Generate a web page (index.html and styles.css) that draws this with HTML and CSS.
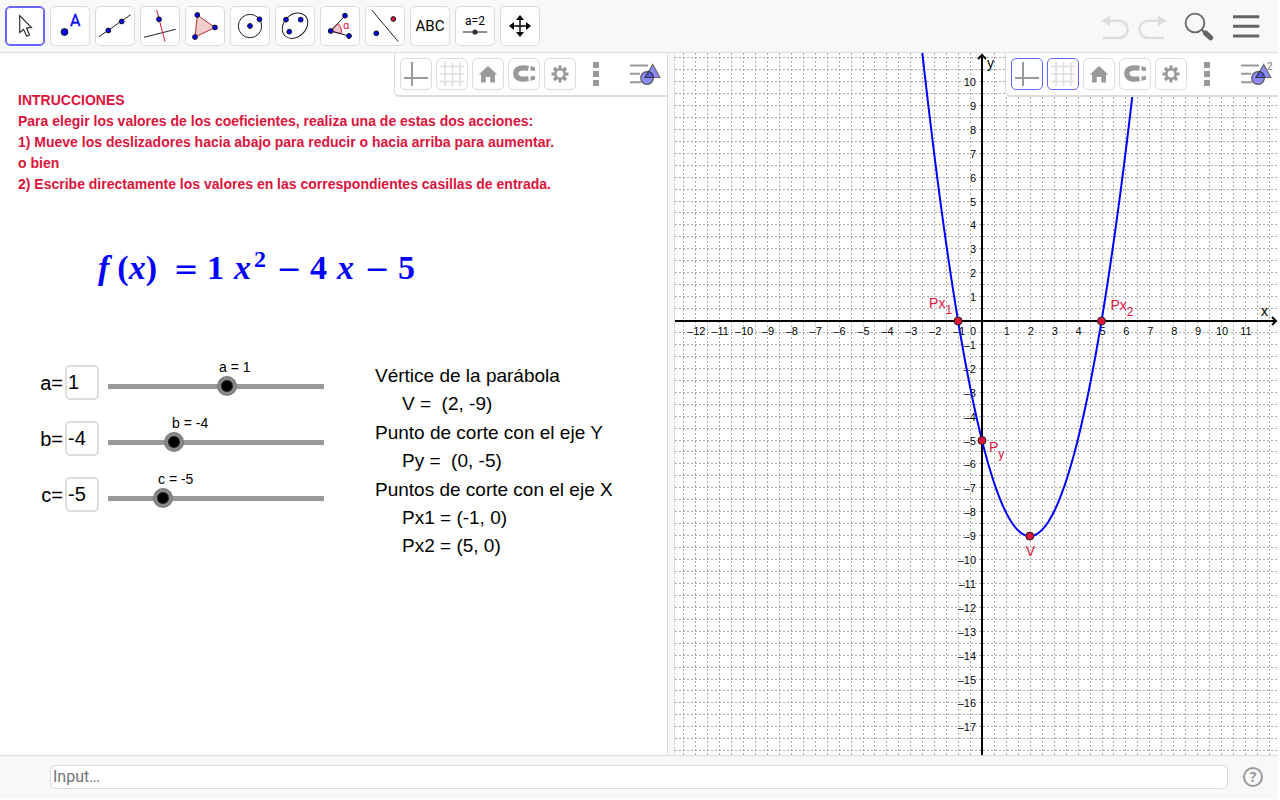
FILE: index.html
```html
<!DOCTYPE html>
<html lang="es">
<head>
<meta charset="utf-8">
<title>Función cuadrática</title>
<link rel="stylesheet" href="styles.css">
</head>
<body>
<svg class="defs" width="0" height="0" aria-hidden="true">
  <symbol id="i-axes" viewBox="0 0 30 30"><path d="M11 3V27M3 19H27" stroke="#999" stroke-width="2" fill="none"/></symbol>
  <symbol id="i-grid" viewBox="0 0 30 30"><path d="M8 3V27M15.500 3V27M23 3V27M3 7.500H27M3 15H27M3 22.500H27" stroke="#e3dcdc" stroke-width="1.600" fill="none"/></symbol>
  <symbol id="i-home" viewBox="0 0 30 30"><path d="M15 7L24.200 15.500H22V23.500H17.300V18H12.700V23.500H8V15.500H5.800Z" fill="#999"/></symbol>
  <symbol id="i-magnet" viewBox="0 0 30 30"><path d="M19.500 9.300C12 8 6.800 9.500 6.800 14.500S12 21 19.500 19.700" stroke="#999" stroke-width="5.200" fill="none"/><path d="M21.500 7L26 8.500V12L21.500 11.500ZM21.500 17.500L26 17V20.500L21.500 22Z" fill="#999"/></symbol>
  <symbol id="i-gear" viewBox="0 0 30 30"><circle cx="15" cy="15" r="4.700" stroke="#999" stroke-width="2.600" fill="none"/><path d="M15 6.500V10M15 20V23.500M6.500 15H10M20 15H23.500M9 9L11.500 11.500M18.500 18.500L21 21M21 9L18.500 11.500M11.500 18.500L9 21" stroke="#999" stroke-width="3.200"/></symbol>
  <symbol id="i-dots" viewBox="0 0 32 32"><path d="M13 4h6v6h-6zM13 13h6v6h-6zM13 22h6v6h-6z" fill="#999"/></symbol>
  <symbol id="i-style" viewBox="0 0 34 32"><path d="M1 7.500H19M1 15.700H11M1 24.300H12" stroke="#999" stroke-width="2"/><path d="M23.700 6.500L16.300 19.500H30.800Z" fill="#8c8cff" stroke="#666" stroke-width="1.200"/><circle cx="18" cy="20" r="6.300" fill="#8c8cff" stroke="#555" stroke-width="1.200"/><path d="M19.500 13.500L16 19.500H24.300A6.300 6.300 0 0 0 19.500 13.500Z" fill="#5c5cf0" stroke="#333" stroke-width="1.200"/></symbol>
</svg>

<div class="app">
  <header class="topbar">
    <div class="tools">
      <button class="tool selected" aria-label="Mover"><svg viewBox="0 0 38 38"><path d="M13.700 8.700V25.500L17.500 22.300L20.800 29.300L23.600 28L20.500 21L25.500 20.500Z" fill="#fff" stroke="#222" stroke-width="1.100"/></svg></button>
      <button class="tool" aria-label="Punto"><svg viewBox="0 0 38 38"><circle cx="13.500" cy="25" r="3.400" class="pt"/><text x="19" y="19" class="t-point">A</text></svg></button>
      <button class="tool" aria-label="Recta"><svg viewBox="0 0 38 38"><path d="M3 29.700L34.700 7.700" class="ln"/><circle cx="12.300" cy="23.500" r="2.400" class="pt"/><circle cx="25.700" cy="14.500" r="2.400" class="pt"/></svg></button>
      <button class="tool" aria-label="Perpendicular"><svg viewBox="0 0 38 38"><path d="M3 30.300L34.700 22.300" class="ln"/><path d="M15.700 3L24 34.700" stroke="#dc143c"/><circle cx="18" cy="12.300" r="2.400" class="pt"/></svg></button>
      <button class="tool" aria-label="Polígono"><svg viewBox="0 0 38 38"><path d="M11.300 8L29 20.500L9 30Z" fill="#f3cccc" stroke="#b03030"/><circle cx="11.300" cy="8" r="2.400" class="pt"/><circle cx="29" cy="20.500" r="2.400" class="pt"/><circle cx="9" cy="30" r="2.400" class="pt"/></svg></button>
      <button class="tool" aria-label="Circunferencia"><svg viewBox="0 0 38 38"><circle cx="19" cy="19" r="11.700" class="ln"/><circle cx="19" cy="19" r="2.400" class="pt"/><circle cx="28.500" cy="12.300" r="2.400" class="pt"/></svg></button>
      <button class="tool" aria-label="Elipse"><svg viewBox="0 0 38 38"><ellipse cx="19" cy="18.700" rx="14.200" ry="11" transform="rotate(-45 19 18.700)" class="ln"/><circle cx="10" cy="12.700" r="2.400" class="pt"/><circle cx="24.700" cy="12.700" r="2.400" class="pt"/><circle cx="13.300" cy="24.700" r="2.400" class="pt"/></svg></button>
      <button class="tool" aria-label="Ángulo"><svg viewBox="0 0 38 38"><path d="M9.700 24L17 16.500A10.500 10.500 0 0 1 20 26.800Z" fill="#f6c4cc" stroke="#dc143c"/><path d="M24 8.700L9.700 24L28 29" class="ln"/><circle cx="9.700" cy="24" r="2.400" class="pt"/><circle cx="24" cy="8.700" r="2.400" class="pt"/><circle cx="28" cy="29" r="2.400" class="pt"/><text x="22" y="22" class="t-angle">α</text></svg></button>
      <button class="tool" aria-label="Simetría"><svg viewBox="0 0 38 38"><path d="M5.700 3L32.300 34.700" class="ln"/><circle cx="10.300" cy="26.300" r="2.400" class="pt"/><circle cx="27.300" cy="12" r="2.400" fill="#dc143c" stroke="#222"/></svg></button>
      <button class="tool abc">ABC</button>
      <button class="tool" aria-label="Deslizador"><svg viewBox="0 0 38 38"><text x="19" y="18" class="t-slider">a=2</text><path d="M6.700 25H31.300" class="ln"/><circle cx="19" cy="25" r="2.600" fill="#333"/></svg></button>
      <button class="tool" aria-label="Desplazar"><svg viewBox="0 0 38 38"><path d="M19 11V27M11 19H27" stroke="#000" stroke-width="1.400"/><path d="M19 8L23 13H15ZM19 30L23 25H15ZM8 19L13 15V23ZM30 19L25 15V23Z"/></svg></button>
    </div>
    <div class="actions">
      <button class="plain" aria-label="Deshacer"><svg viewBox="0 0 32 32"><path d="M1.300 10.700L10 5.300V16Z" fill="#ddd"/><path d="M9 10.700H19A8.600 8.600 0 0 1 19 28H3" class="arc"/></svg></button>
      <button class="plain" aria-label="Rehacer"><svg viewBox="0 0 32 32"><path d="M30.700 10.700L22 5.300V16Z" fill="#ddd"/><path d="M23 10.700H12A8.600 8.600 0 0 0 12 28H28" class="arc"/></svg></button>
      <button class="plain search" aria-label="Buscar"><svg viewBox="0 0 32 32"><circle cx="13" cy="13" r="9.400" fill="none" stroke="#666" stroke-width="1.800"/><path d="M19.500 19.500L23 23" stroke="#666" stroke-width="2"/><path d="M23.500 23L28.500 27.700" stroke="#666" stroke-width="5.200" stroke-linecap="round"/></svg></button>
      <button class="plain menu" aria-label="Menú"><svg viewBox="0 0 32 32"><path d="M3 6.700H29.300M3 16.300H29.300M3 26H29.300" stroke="#666" stroke-width="3"/></svg></button>
    </div>
  </header>

  <main class="views">
    <section class="view">
      <div class="stylebar">
        <button class="opt" aria-label="Ejes"><svg><use href="#i-axes"/></svg></button>
        <button class="opt" aria-label="Cuadrícula"><svg><use href="#i-grid"/></svg></button>
        <button class="opt" aria-label="Inicio"><svg><use href="#i-home"/></svg></button>
        <button class="opt" aria-label="Captura"><svg><use href="#i-magnet"/></svg></button>
        <button class="opt" aria-label="Ajustes"><svg><use href="#i-gear"/></svg></button>
        <button class="plain" aria-label="Más"><svg><use href="#i-dots"/></svg></button>
        <button class="plain toggle" aria-label="Barra de estilo"><svg><use href="#i-style"/></svg></button>
      </div>
      <div class="sheet">
        <div class="instructions">
          <p>INTRUCCIONES</p>
          <p>Para elegir los valores de los coeficientes, realiza una de estas dos acciones:</p>
          <p>1) Mueve los deslizadores hacia abajo para reducir o hacia arriba para aumentar.</p>
          <p>o bien</p>
          <p>2) Escribe directamente los valores en las correspondientes casillas de entrada.</p>
        </div>
        <div class="formula"><span class="fn"><i>f</i></span><span class="arg">(<i>x</i>)</span><span class="op">=</span><span class="num">1</span><span><i>x</i><sup>2</sup></span><span class="op">−</span><span class="num">4</span><span><i>x</i></span><span class="op">−</span><span class="num">5</span></div>
        <div class="panel">
          <div class="coefs">
            <div class="coef">
              <label for="a-box">a=</label><input class="box" id="a-box" type="text" value="1">
              <div class="slide"><label for="a-range" style="margin-left:118px">a = 1</label><input id="a-range" type="range" min="-10" max="10" value="1"></div>
            </div>
            <div class="coef">
              <label for="b-box">b=</label><input class="box" id="b-box" type="text" value="-4">
              <div class="slide"><label for="b-range" style="margin-left:71px">b = -4</label><input id="b-range" type="range" min="-10" max="10" value="-4"></div>
            </div>
            <div class="coef">
              <label for="c-box">c=</label><input class="box" id="c-box" type="text" value="-5">
              <div class="slide"><label for="c-range" style="margin-left:57px">c = -5</label><input id="c-range" type="range" min="-10" max="10" value="-5"></div>
            </div>
          </div>
          <dl class="results">
            <dt>Vértice de la parábola</dt>
            <dd>V =&nbsp; (2, -9)</dd>
            <dt>Punto de corte con el eje Y</dt>
            <dd>Py =&nbsp; (0, -5)</dd>
            <dt>Puntos de corte con el eje X</dt>
            <dd>Px1 = (-1, 0)</dd>
            <dd>Px2 = (5, 0)</dd>
          </dl>
        </div>
      </div>
    </section>
    <div class="splitter"></div>
    <section class="view">
      <svg class="plot" id="plot" role="img" aria-label="Gráfica de f(x)"></svg>
      <div class="stylebar">
        <button class="opt on" aria-label="Ejes"><svg><use href="#i-axes"/></svg></button>
        <button class="opt on" aria-label="Cuadrícula"><svg><use href="#i-grid"/></svg></button>
        <button class="opt" aria-label="Inicio"><svg><use href="#i-home"/></svg></button>
        <button class="opt" aria-label="Captura"><svg><use href="#i-magnet"/></svg></button>
        <button class="opt" aria-label="Ajustes"><svg><use href="#i-gear"/></svg></button>
        <button class="plain" aria-label="Más"><svg><use href="#i-dots"/></svg></button>
        <button class="plain toggle" aria-label="Barra de estilo"><svg><use href="#i-style"/><text x="27" y="12" class="t-two">2</text></svg></button>
      </div>
    </section>
  </main>

  <footer class="inputbar">
    <input class="entry" type="text" aria-label="Input" placeholder="Input…">
    <button class="help" aria-label="Ayuda">?</button>
  </footer>
</div>
<script src="plot.js"></script>
</body>
</html>
```
FILE: styles.css
```css
* { box-sizing: border-box; }
body { margin: 0; background: #fff; font-family: "Liberation Sans", Arial, sans-serif; color: #000; }
button { padding: 0; font: inherit; }
button svg { display: block; }
p, dl, dd { margin: 0; }
.defs { position: absolute; }

.app { display: grid; grid-template-rows: 53px 1fr 44px; height: 100vh; padding: 0 2px 1px 0; }

.topbar { display: flex; justify-content: space-between; align-items: center; padding: 0 16px 0 5px; background: #f8f8f8; border-bottom: 1px solid #dcdcdc; }
.tools { display: flex; gap: 5px; }
.tool { width: 40px; height: 40px; border: 1px solid #dcdcdc; border-radius: 5px; background: #fff; }
.tool.selected { border-color: #6666ff; box-shadow: inset 0 0 0 1px #6666ff; }
.tool svg { width: 38px; height: 38px; }
.tool.abc { font: 15px Roboto, sans-serif; color: #000; }
.pt { fill: #00f; stroke: #111; stroke-width: 1; }
.ln { fill: none; stroke: #222; stroke-width: 1; }
.t-point { font: 16px Roboto, sans-serif; fill: #00f; stroke: #00f; stroke-width: 0.3px; }
.t-angle { font: 11px Roboto, sans-serif; fill: #dc143c; }
.t-slider { font: 12px Roboto, sans-serif; text-anchor: middle; }
.t-two { font: 10px "Liberation Sans", sans-serif; fill: #777; }
.actions { display: flex; gap: 4px; }
.plain { width: 32px; height: 32px; border: 0; background: none; }
.plain svg { width: 32px; height: 32px; }
.arc { fill: none; stroke: #ddd; stroke-width: 2.6px; }
.search { margin-left: 10px; }
.menu { margin-left: 12px; }

.views { display: grid; grid-template-columns: 667fr 8px 603fr; min-height: 0; }
.view { position: relative; min-width: 0; overflow: hidden; }
.splitter { background: #f8f8f8; border: 1px solid #dcdcdc; border-width: 0 1px; }

.stylebar { position: absolute; top: 0; right: 0; display: flex; gap: 4px; padding: 5px 4px 5px 5px; background: #fff; border: 1px solid #dcdcdc; border-width: 0 0 2px 1px; border-bottom-left-radius: 5px; }
.opt { width: 32px; height: 32px; border: 1px solid #dcdcdc; border-radius: 5px; background: #fff; }
.opt.on { border-color: #6666ff; }
.opt svg { width: 30px; height: 30px; }
.toggle { width: 34px; margin-left: 13px; }
.toggle svg { width: 34px; overflow: visible; }

.sheet { padding: 37px 18px 0; }
.instructions { font-size: 14px; font-weight: bold; line-height: 21px; color: #dc143c; }
.formula { display: flex; align-items: baseline; margin: 51px 0 0 80px; font: bold 34px/44px "Liberation Serif", serif; color: #00f; }
.formula span { white-space: nowrap; }
.formula sup { margin-left: 3px; font-size: 24px; line-height: 0; vertical-align: 12px; }
.formula .fn { margin-right: 8px; }
.formula .arg { margin-right: 6px; }
.formula .op { width: 26px; margin: 0 8px 0 10px; text-align: center; font: 30px/30px "DejaVu Sans", sans-serif; }
.formula .num { margin-right: 10px; }
.panel { display: flex; align-items: flex-start; margin-top: 69px; padding-left: 22px; }
.coefs { display: grid; gap: 15px; width: 294px; flex: none; }
.coef { display: grid; grid-template-columns: 25px 34px 232px; align-items: end; font-size: 20px; }
.coef > label { padding-right: 2px; line-height: 33px; text-align: right; white-space: nowrap; }
.box { width: 34px; height: 35px; padding: 0 0 0 1px; border: 2px solid #dcdcdc; border-radius: 5px; background: #fff; font: 20px "Liberation Sans", sans-serif; color: #000; }
.slide { display: grid; grid-template-rows: 17px 20px; padding: 0 0 4px 2px; font-size: 14px; line-height: 17px; }
.slide input { appearance: none; width: 230px; height: 20px; margin: 0; background: linear-gradient(#999, #999) center / calc(100% - 14px) 5px no-repeat; }
.slide input::-webkit-slider-thumb { appearance: none; width: 18px; height: 18px; border: 3px solid #888; border-radius: 50%; background: #000; box-shadow: inset 0 0 0 1px #222, 0 0 0 1px #777; }
.results { margin: 2px 0 0 41px; font-size: 19px; white-space: nowrap; }
.results dt { line-height: 29px; }
.results dd { padding-left: 27px; line-height: 28px; }

.plot { display: block; width: 100%; height: 100%; }
.grid { stroke: #aaa; stroke-width: 1; stroke-dasharray: 2 2; shape-rendering: crispEdges; }
.axis { stroke: #000; stroke-width: 2; fill: none; }
.tick { font: 11px "Liberation Sans", sans-serif; fill: #000; stroke: #fff; stroke-width: 2px; paint-order: stroke; }
.axis-name { font: 14px "Liberation Sans", sans-serif; }
.curve { fill: none; stroke: #00f; stroke-width: 2; }
.mark { fill: #dc143c; stroke: #222; }
.mark-name { font: 14px "Liberation Sans", sans-serif; fill: #dc143c; }
.mark-sub { font-size: 12px; }

.inputbar { display: flex; align-items: center; gap: 15px; padding: 0 15px 2px 50px; background: #f8f8f8; border-top: 1px solid #dcdcdc; }
.entry { flex: 1; height: 24px; padding: 0 2px; border: 1px solid #dcdcdc; border-radius: 5px; background: #fff; font: 16px Roboto, sans-serif; }
.entry::placeholder { color: #757575; opacity: 1; }
.help { width: 20px; height: 20px; border: 2px solid #999; border-radius: 50%; background: none; color: #999; font: bold 14px/16px "Open Sans", sans-serif; }
```
FILE: plot.js
```js
const svg = document.getElementById("plot");
const NS = "http://www.w3.org/2000/svg";
const UNIT = 23.9;

function add(name, attrs, text) {
  const el = document.createElementNS(NS, name);
  for (const key in attrs) el.setAttribute(key, attrs[key]);
  if (text !== undefined) el.textContent = text;
  svg.appendChild(el);
  return el;
}

function draw() {
  svg.replaceChildren();
  const w = svg.clientWidth, h = svg.clientHeight;
  const ox = Math.round(w * 0.509), oy = Math.round(h * 0.382);
  const X = x => ox + x * UNIT, Y = y => oy - y * UNIT;
  const [a, b, c] = ["a", "b", "c"].map(k => Number(document.getElementById(k + "-range").value));
  const f = x => a * x * x + b * x + c;
  const minus = n => (n < 0 ? "–" + -n : String(n));

  // Half-unit grid
  for (let n = Math.ceil(-ox / UNIT * 2); X(n / 2) < w; n++) {
    const x = Math.round(X(n / 2)) + 0.5;
    add("line", { class: "grid", x1: x, x2: x, y1: 0, y2: h });
  }
  for (let n = Math.ceil(-(h - oy) / UNIT * 2); Y(n / 2) > 0; n++) {
    const y = Math.round(Y(n / 2)) - 0.5;
    add("line", { class: "grid", x1: 0, x2: w, y1: y, y2: y });
  }

  // Axes and their numbers
  add("path", { class: "axis", d: `M0 ${oy}H${w - 2}M${w - 6} ${oy - 4}L${w - 2} ${oy}L${w - 6} ${oy + 4}` });
  add("path", { class: "axis", d: `M${ox} ${h}V2M${ox - 4} 6L${ox} 2L${ox + 4} 6` });
  for (let n = -12; n <= 11; n++) {
    if (n) add("text", { class: "tick", x: X(n) + 1, y: oy + 14, "text-anchor": "middle" }, minus(n));
  }
  for (let n = -17; n <= 10; n++) {
    if (n) add("text", { class: "tick", x: ox - 6, y: Y(n) + 4, "text-anchor": "end" }, minus(n));
  }
  add("text", { class: "tick", x: ox - 6, y: oy + 14, "text-anchor": "end" }, "0");
  add("text", { class: "axis-name", x: w - 17, y: oy - 5 }, "x");
  add("text", { class: "axis-name", x: ox + 5, y: 15 }, "y");

  // Parabola
  let d = "";
  for (let px = 0; px <= w; px++) {
    d += (px ? "L" : "M") + px + " " + Y(f((px - ox) / UNIT));
  }
  add("path", { class: "curve", d });

  // Vertex and intercepts
  const root = Math.sqrt(b * b - 4 * a * c);
  const vx = -b / (2 * a);
  const marks = [
    [(-b - root) / (2 * a), 0, "Px", "1", -29, -13],
    [(-b + root) / (2 * a), 0, "Px", "2", 9, -11],
    [0, c, "P", "y", 7, 11],
    [vx, f(vx), "V", "", -4, 20]
  ];
  for (const [x, y, name, sub, dx, dy] of marks) {
    add("circle", { class: "mark", cx: X(x), cy: Y(y), r: 4 });
    const label = add("text", { class: "mark-name", x: X(x) + dx, y: Y(y) + dy }, name);
    if (sub) {
      const s = document.createElementNS(NS, "tspan");
      s.setAttribute("class", "mark-sub");
      s.setAttribute("dy", 6);
      s.textContent = sub;
      label.appendChild(s);
    }
  }
}

draw();
window.addEventListener("resize", draw);
```
